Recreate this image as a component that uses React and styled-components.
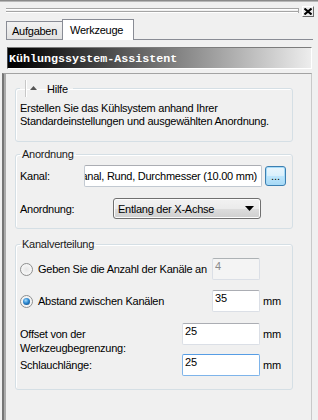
import React from 'react';
import styled, { createGlobalStyle } from 'styled-components';

const Global = createGlobalStyle`
  html, body { margin: 0; padding: 0; background: #f0f0f0; }
  body {
    font-family: "Liberation Sans", Arial, sans-serif;
    font-size: 11px;
    letter-spacing: -0.25px;
    color: #000;
  }
  * { box-sizing: border-box; }
`;

const Window = styled.div`
  width: 318px;
  height: 420px;
  overflow: hidden;
  background: #f0f0f0;
  border-top: 1px solid #8a8a8a;
  box-shadow: inset 0 1px 0 #b8b8b8;
  display: flex;
  flex-direction: column;
`;

const Header = styled.div`
  height: 18px;
  display: flex;
  align-items: flex-start;
  padding: 5px 4px 0 6px;
`;

const Grip = styled.div`
  flex: 1;
  height: 5px;
  margin: 2px 3px 0 0;
  border-right: 1px solid #a5a5a5;
  background: linear-gradient(
    to bottom,
    #a5a5a5 0 1px,
    #ffffff 1px 2px,
    transparent 2px 3px,
    #a5a5a5 3px 4px,
    #ffffff 4px 5px
  );
`;

const CloseButton = styled.button`
  width: 12px;
  height: 11px;
  padding: 0;
  margin: 0;
  background: #ececec;
  border: 1px solid;
  border-color: #ffffff #6a6a6a #6a6a6a #ffffff;
  display: flex;
  align-items: center;
  justify-content: center;
`;

const TabStrip = styled.div`
  height: 21px;
  display: flex;
  align-items: flex-end;
  padding: 0 5px 0 6px;
`;

const Tab = styled.div`
  height: ${(p) => (p.$active ? '21px' : '19px')};
  width: ${(p) => p.$w}px;
  padding-left: ${(p) => p.$pl}px;
  display: flex;
  align-items: center;
  border: 1px solid #898c95;
  border-bottom: ${(p) => (p.$active ? 'none' : '1px solid #898c95')};
  border-right: ${(p) => (p.$active ? '1px solid #898c95' : 'none')};
  background: ${(p) =>
    p.$active ? '#ffffff' : 'linear-gradient(to bottom, #f2f2f2, #e1e1e1)'};
  line-height: 14px;
  white-space: nowrap;
`;

const TabFill = styled.div`
  flex: 1;
  border-bottom: 1px solid #898c95;
`;

const TitleBar = styled.div`
  margin: 7px 6px 0 7px;
  height: 22px;
  background: linear-gradient(to right, #000000 0%, #050505 4%, #ededed 100%);
  border-top: 1px solid #7c7c7c;
  border-left: 1px solid #4a4a4a;
  border-right: 1px solid #ffffff;
  border-bottom: 1px solid #ffffff;
  color: #ffffff;
  font-family: "Liberation Mono", "Courier New", monospace;
  font-weight: bold;
  font-size: 11.7px;
  letter-spacing: 0;
  display: flex;
  align-items: center;
  padding: 1px 0 0 1px;
`;

const Panel = styled.div`
  flex: 1;
  margin: 4px 6px 0 2px;
  border-top: 1px solid #a3a3a3;
  border-left: 2px solid #757575;
  border-right: 1px solid #c9c9c9;
  box-shadow: inset 2px 0 0 #ababab;
  padding: 6px 18px 0 11px;
  display: flex;
  flex-direction: column;
`;

const Group = styled.fieldset`
  margin: ${(p) => p.$mt || 0}px 0 0 0;
  padding: ${(p) => p.$pad};
  border: 1px solid #d5dfe5;
  border-radius: 3px;
  box-shadow: inset 1px 1px 0 #ffffff;
  min-width: 0;
`;

const Legend = styled.legend`
  padding: 0 2px;
  margin-left: 0;
  line-height: 14px;
  color: #1a1a1a;
`;

const HelpLegend = styled.legend`
  padding: 0 2px;
  height: 17px;
  display: flex;
  align-items: center;
`;

const Sep = styled.span`
  width: 2px;
  height: 17px;
  margin-left: 3px;
  border-left: 1px solid #c7c7c7;
  border-right: 1px solid #ffffff;
`;

const Arrow = styled.svg`
  margin: 0 0 1px 3px;
`;

const HelpTitle = styled.span`
  margin-left: 10px;
  margin-right: 3px;
  line-height: 14px;
`;

const HelpText = styled.p`
  margin: 0;
  line-height: 13px;
`;

const Row = styled.div`
  display: flex;
  align-items: center;
  height: ${(p) => p.$h || 22}px;
  margin-top: ${(p) => p.$mt || 0}px;
`;

const Label = styled.span`
  width: ${(p) => p.$w}px;
  flex: ${(p) => (p.$w ? 'none' : '1')};
  white-space: nowrap;
  line-height: 14px;
`;

const TextBox = styled.div`
  width: 178px;
  height: 22px;
  border: 1px solid #c2c9d1;
  border-top-color: #abadb3;
  border-radius: 2px;
  background: #ffffff;
  overflow: hidden;
  display: flex;
  align-items: center;
  justify-content: flex-end;
  padding: 0 4px 0 0;
  white-space: nowrap;
`;

const BrowseButton = styled.button`
  width: 21px;
  height: 20px;
  margin-left: 3px;
  padding: 0 0 3px;
  border: 1px solid #3c7fb1;
  border-radius: 3px;
  box-shadow: inset 0 0 0 1px #a6dbf8;
  background: linear-gradient(to bottom, #eaf6fd 0%, #d9f0fc 50%, #bee6fd 51%, #a7d9f5 100%);
  font-family: inherit;
  font-size: 11px;
  display: flex;
  align-items: flex-end;
  justify-content: center;
  color: #000;
`;

const Select = styled.div`
  width: 148px;
  height: 21px;
  border: 1px solid #707070;
  border-radius: 3px;
  background: linear-gradient(to bottom, #f2f2f2 0%, #ebebeb 50%, #dddddd 51%, #cfcfcf 100%);
  box-shadow: inset 0 0 0 1px #fcfcfc;
  display: flex;
  align-items: center;
  justify-content: space-between;
  padding: 0 6px 0 4px;
`;

const RadioLabel = styled.label`
  flex: 1;
  display: flex;
  align-items: center;
  gap: 5px;
  white-space: nowrap;
`;

const Radio = styled.span`
  position: relative;
  width: 13px;
  height: 13px;
  border-radius: 50%;
  border: 1px solid #8e8f8f;
  background: radial-gradient(circle at 50% 50%, #e6e6e6 0%, #f4f4f4 55%, #ffffff 100%);
  box-shadow: inset 0 0 0 1px #f4f4f4;
  flex: none;
  &::after {
    content: '';
    display: ${(p) => (p.$checked ? 'block' : 'none')};
    position: absolute;
    left: 2px;
    top: 2px;
    width: 7px;
    height: 7px;
    border-radius: 50%;
    background: radial-gradient(circle at 40% 35%, #a7dcfb 0%, #2b87d1 45%, #0e3e6f 100%);
  }
`;

const NumBox = styled.input`
  width: ${(p) => p.$w}px;
  height: 22px;
  margin: 0;
  border: 1px solid ${(p) => (p.$focus ? '#7eb4ea' : '#dbdfe6')};
  border-top-color: ${(p) => (p.$focus ? '#569de5' : p.$disabled ? '#adb2b5' : '#abadb3')};
  border-radius: 2px;
  background: ${(p) => (p.$disabled ? '#f4f4f4' : '#ffffff')};
  color: ${(p) => (p.$disabled ? '#8a8a8a' : '#000')};
  font-family: inherit;
  font-size: 11px;
  letter-spacing: 0;
  padding: 0 2px 6px;
  line-height: 13px;
  outline: none;
`;

const Unit = styled.span`
  width: 23px;
  margin-left: 3px;
  flex: none;
`;

const TwoLine = styled.span`
  flex: 1;
  align-self: flex-start;
  padding-top: 4px;
  line-height: 14px;
  white-space: nowrap;
`;

export default function App() {
  return (
    <>
      <Global />
      <Window>
        <Header>
          <Grip />
          <CloseButton aria-label="Schließen">
            <svg width="8" height="7" viewBox="0 0 8 7">
              <path d="M0.5 0.5 L7.5 6.5 M7.5 0.5 L0.5 6.5" stroke="#000" strokeWidth="2" />
            </svg>
          </CloseButton>
        </Header>
        <TabStrip>
          <Tab $w={56} $pl={5}>Aufgaben</Tab>
          <Tab $active $w={72} $pl={7}>Werkzeuge</Tab>
          <TabFill />
        </TabStrip>
        <TitleBar>Kühlungssystem-Assistent</TitleBar>
        <Panel>
          <Group $pad="5px 4px 13px 4px">
            <HelpLegend>
              <Sep />
              <Arrow width="7" height="4" viewBox="0 0 7 4">
                <path d="M0 4 L3.5 0 L7 4 Z" fill="#555" />
              </Arrow>
              <HelpTitle>Hilfe</HelpTitle>
            </HelpLegend>
            <HelpText>
              Erstellen Sie das Kühlsystem anhand Ihrer
              <br />
              Standardeinstellungen und ausgewählten Anordnung.
            </HelpText>
          </Group>

          <Group $mt={5} $pad="4px 4px 9px 4px">
            <Legend>Anordnung</Legend>
            <Row>
              <Label $w={64}>Kanal:</Label>
              <TextBox>Kanal, Rund, Durchmesser (10.00 mm)</TextBox>
              <BrowseButton>...</BrowseButton>
            </Row>
            <Row $h={21} $mt={11}>
              <Label $w={93}>Anordnung:</Label>
              <Select>
                <span>Entlang der X-Achse</span>
                <svg width="9" height="5" viewBox="0 0 9 5">
                  <path d="M0 0 L9 0 L4.5 5 Z" fill="#000" />
                </svg>
              </Select>
            </Row>
          </Group>

          <Group $mt={8} $pad="7px 6px 13px 4px">
            <Legend>Kanalverteilung</Legend>
            <Row>
              <RadioLabel>
                <Radio />
                Geben Sie die Anzahl der Kanäle an
              </RadioLabel>
              <NumBox $w={48} $disabled readOnly value="4" />
              <Unit />
            </Row>
            <Row $mt={10}>
              <RadioLabel>
                <Radio $checked />
                Abstand zwischen Kanälen
              </RadioLabel>
              <NumBox $w={48} readOnly value="35" />
              <Unit>mm</Unit>
            </Row>
            <Row $mt={11}>
              <TwoLine>
                Offset von der
                <br />
                Werkzeugbegrenzung:
              </TwoLine>
              <NumBox $w={78} readOnly value="25" />
              <Unit>mm</Unit>
            </Row>
            <Row $mt={9}>
              <Label>Schlauchlänge:</Label>
              <NumBox $w={78} $focus readOnly value="25" />
              <Unit>mm</Unit>
            </Row>
          </Group>
        </Panel>
      </Window>
    </>
  );
}
